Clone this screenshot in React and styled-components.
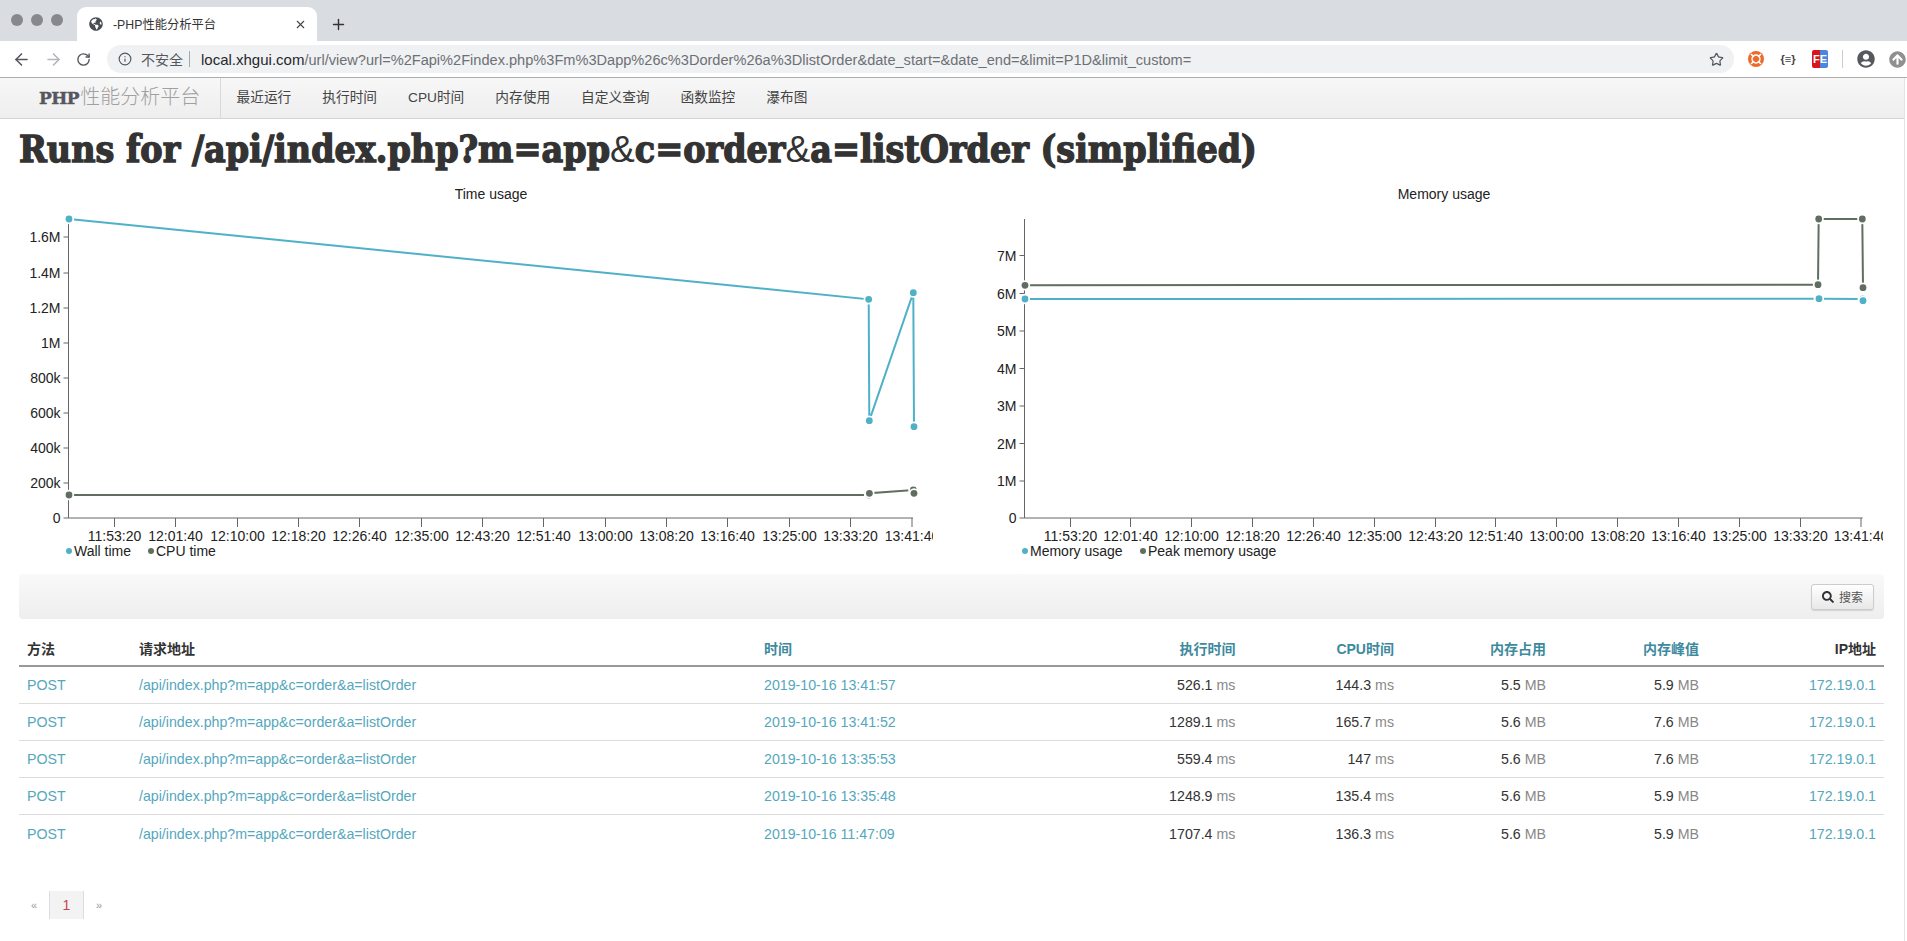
import React from 'react';
import styled, { createGlobalStyle } from 'styled-components';
import { ArrowLeft, ArrowRight, RotateCw, Info, Star, X, Plus } from 'lucide-react';
import { FaGlobeAmericas, FaSearch, FaUserCircle, FaArrowCircleUp } from 'react-icons/fa';

const SANS = '"Liberation Sans", "Noto Sans CJK SC", Arial, sans-serif';
const WALL = '#4fb1c8';
const CPU = '#5f6e60';

const timeLabels = ['11:53:20', '12:01:40', '12:10:00', '12:18:20', '12:26:40', '12:35:00', '12:43:20', '12:51:40', '13:00:00', '13:08:20', '13:16:40', '13:25:00', '13:33:20', '13:41:40'];

const timeChart = {
  title: 'Time usage',
  left: 19,
  axisX: 68.5,
  axisEnd: 913,
  titleX: 491,
  yTicks: [['1.6M', 237], ['1.4M', 273], ['1.2M', 308], ['1M', 343], ['800k', 378], ['600k', 413], ['400k', 448], ['200k', 483], ['0', 518]],
  xTicks: [114.5, 175.5, 237.5, 298.5, 359.5, 421.5, 482.5, 543.5, 605.5, 666.5, 727.5, 789.5, 850.5, 912],
  series: [
    { color: WALL, points: [[69, 219], [868.7, 299.3], [869.3, 420.7], [913.3, 292.7], [914, 426.7]] },
    { color: CPU, points: [[69, 495], [869, 495], [869.4, 493.3], [913.3, 490], [914, 493.3]] },
  ],
  legend: [
    { label: 'Wall time', color: WALL, x: 69 },
    { label: 'CPU time', color: CPU, x: 151 },
  ],
};

const memoryChart = {
  title: 'Memory usage',
  left: 969,
  axisX: 1024.5,
  axisEnd: 1862.7,
  titleX: 1444,
  yTicks: [['7M', 255.5], ['6M', 293.5], ['5M', 331], ['4M', 368.5], ['3M', 406], ['2M', 443.5], ['1M', 481], ['0', 518]],
  xTicks: [1070.5, 1130.5, 1191.5, 1252.5, 1313.5, 1374.5, 1435.5, 1495.5, 1556.5, 1617.5, 1678.5, 1739.5, 1800.5, 1861],
  series: [
    { color: WALL, points: [[1025, 299], [1818.7, 298.7], [1819, 298.7], [1862.7, 299], [1863, 300.7]] },
    { color: CPU, points: [[1025, 285.3], [1818, 284.7], [1818.7, 219], [1862.3, 219], [1863, 287.7]] },
  ],
  legend: [
    { label: 'Memory usage', color: WALL, x: 1025 },
    { label: 'Peak memory usage', color: CPU, x: 1143 },
  ],
};

const navItems = ['最近运行', '执行时间', 'CPU时间', '内存使用', '自定义查询', '函数监控', '瀑布图'];

const columns = [
  { label: '方法', width: 112 },
  { label: '请求地址', width: 625 },
  { label: '时间', width: 288, sort: true },
  { label: '执行时间', width: 199.4, sort: true, right: true },
  { label: 'CPU时间', width: 158.6, sort: true, right: true },
  { label: '内存占用', width: 152, sort: true, right: true },
  { label: '内存峰值', width: 153, sort: true, right: true },
  { label: 'IP地址', width: 177, right: true },
];

const rows = [
  ['2019-10-16 13:41:57', '526.1', '144.3', '5.5', '5.9'],
  ['2019-10-16 13:41:52', '1289.1', '165.7', '5.6', '7.6'],
  ['2019-10-16 13:35:53', '559.4', '147', '5.6', '7.6'],
  ['2019-10-16 13:35:48', '1248.9', '135.4', '5.6', '5.9'],
  ['2019-10-16 11:47:09', '1707.4', '136.3', '5.6', '5.9'],
];

function Chart({ data }) {
  return (
    <ChartSvg viewBox={`${data.left} 180 914 382`}>
      <ChartTitle x={data.titleX} y={199}>{data.title}</ChartTitle>
      <Axis d={`M${data.axisX} 219V518H${data.axisEnd}`} />
      {data.yTicks.map(([label, y]) => (
        <g key={label}>
          <Axis d={`M${data.axisX - 5} ${y}H${data.axisX}`} />
          <TickText x={data.axisX - 8} y={y + 5} $anchor='end'>{label}</TickText>
        </g>
      ))}
      {data.xTicks.map((x, i) => (
        <g key={x}>
          <Axis d={`M${x} 518V527`} />
          <TickText x={x} y={541} $anchor='middle'>{timeLabels[i]}</TickText>
        </g>
      ))}
      {data.series.map(s => (
        <g key={s.color}>
          <SeriesLine stroke={s.color} points={s.points.map(p => p.join(',')).join(' ')} />
          {s.points.map(p => (
            <SeriesDot key={p.join()} cx={p[0]} cy={p[1]} fill={s.color} />
          ))}
        </g>
      ))}
      {data.legend.map(item => (
        <g key={item.label}>
          <circle cx={item.x} cy={551} r={3} fill={item.color} />
          <TickText x={item.x + 5} y={556} $anchor='start'>{item.label}</TickText>
        </g>
      ))}
    </ChartSvg>
  );
}

function App() {
  return (
    <Screen>
      <GlobalStyle />
      <TabStrip>
        <Lights><Light /><Light /><Light /></Lights>
        <Tab>
          <FaGlobeAmericas size={14} color='#4a4d52' />
          <TabTitle>-PHP性能分析平台</TabTitle>
          <X size={13} color='#444' />
        </Tab>
        <NewTab><Plus size={17} color='#333' strokeWidth={2} /></NewTab>
      </TabStrip>
      <Toolbar>
        <ToolIcons>
          <ArrowLeft size={19} color='#54585e' strokeWidth={2} />
          <ArrowRight size={19} color='#b3b6ba' strokeWidth={2} />
          <RotateCw size={15} color='#54585e' strokeWidth={2.2} />
        </ToolIcons>
        <Omnibox>
          <Info size={14} color='#54585e' />
          <Insecure>不安全</Insecure>
          <UrlDivider />
          <Url><b>local.xhgui.com</b>/url/view?url=%2Fapi%2Findex.php%3Fm%3Dapp%26c%3Dorder%26a%3DlistOrder&amp;date_start=&amp;date_end=&amp;limit=P1D&amp;limit_custom=</Url>
          <Star size={15} color='#54585e' />
        </Omnibox>
        <Extensions>
          <svg width='16' height='16' viewBox='0 0 16 16'>
            <circle cx='8' cy='8' r='8' fill='#ec6a2c' />
            <circle cx='8' cy='8' r='4' fill='none' stroke='#fff' strokeWidth='1.4' />
            <path d='M3 3l3 3M13 3l-3 3M3 13l3-3M13 13l-3-3' stroke='#fff' strokeWidth='1.6' />
          </svg>
          <JsonMark>{'{≡}'}</JsonMark>
          <FeBadge>FE</FeBadge>
          <ExtDivider />
          <FaUserCircle size={18} color='#55585d' />
          <FaArrowCircleUp size={17} color='#909090' />
        </Extensions>
      </Toolbar>
      <Viewport>
        <Page>
          <Navbar>
            <Brand><strong>PHP</strong>性能分析平台</Brand>
            <NavList>
              {navItems.map(item => <NavLink key={item}>{item}</NavLink>)}
            </NavList>
          </Navbar>
          <Content>
            <Heading>
              Runs for /api/index.php?m=app<Amp>&amp;</Amp>c=order<Amp>&amp;</Amp>a=listOrder (simplified)
            </Heading>
            <Charts>
              <Chart data={timeChart} />
              <Chart data={memoryChart} />
            </Charts>
            <FilterBar>
              <SearchButton><FaSearch size={12} color='#333' />搜索</SearchButton>
            </FilterBar>
            <RunsTable>
              <thead>
                <tr>
                  {columns.map(col => (
                    <HeadCell key={col.label} $width={col.width} $right={col.right} $sort={col.sort}>{col.label}</HeadCell>
                  ))}
                </tr>
              </thead>
              <tbody>
                {rows.map(row => (
                  <BodyRow key={row[0]}>
                    <Cell><Link>POST</Link></Cell>
                    <Cell><Link>/api/index.php?m=app&amp;c=order&amp;a=listOrder</Link></Cell>
                    <Cell><Link>{row[0]}</Link></Cell>
                    <Cell $right>{row[1]} <Unit>ms</Unit></Cell>
                    <Cell $right>{row[2]} <Unit>ms</Unit></Cell>
                    <Cell $right>{row[3]} <Unit>MB</Unit></Cell>
                    <Cell $right>{row[4]} <Unit>MB</Unit></Cell>
                    <Cell $right><Link>172.19.0.1</Link></Cell>
                  </BodyRow>
                ))}
              </tbody>
            </RunsTable>
            <Pagination>
              <PageArrow $width={30}>«</PageArrow>
              <PageCurrent>1</PageCurrent>
              <PageArrow $width={30}>»</PageArrow>
            </Pagination>
          </Content>
        </Page>
        <ScrollTrack />
      </Viewport>
    </Screen>
  );
}

export default App;

const GlobalStyle = createGlobalStyle`
  html, body {
    margin: 0;
    height: 100%;
    overflow: hidden;
    background: #fff;
  }
  body {
    font-family: ${SANS};
    font-size: 14px;
    color: #333;
  }
`

const Screen = styled.div`
  height: 941px;
  display: flex;
  flex-direction: column;
`

const TabStrip = styled.div`
  height: 41px;
  flex: none;
  background: #d9dce1;
  display: flex;
  align-items: flex-end;
`

const Lights = styled.div`
  width: 77px;
  height: 34px;
  padding-left: 11px;
  box-sizing: border-box;
  display: flex;
  gap: 8px;
  align-items: flex-start;
  padding-top: 7px;
`

const Light = styled.span`
  width: 12px;
  height: 12px;
  border-radius: 50%;
  background: #86888c;
`

const Tab = styled.div`
  width: 240px;
  height: 34px;
  box-sizing: border-box;
  padding: 0 10px 0 12px;
  background: #fff;
  border-radius: 9px 9px 0 0;
  display: flex;
  align-items: center;
`

const TabTitle = styled.span`
  flex: 1;
  margin-left: 10px;
  font-size: 12.3px;
  color: #333;
`

const NewTab = styled.div`
  height: 34px;
  margin-left: 13px;
  display: flex;
  align-items: center;
`

const Toolbar = styled.div`
  height: 36px;
  flex: none;
  box-sizing: content-box;
  background: #fff;
  border-bottom: 1px solid #adadad;
  display: flex;
  align-items: center;
`

const ToolIcons = styled.div`
  width: 107px;
  flex: none;
  padding-left: 12px;
  box-sizing: border-box;
  display: flex;
  align-items: center;
  gap: 13px;
`

const Omnibox = styled.div`
  width: 1627px;
  flex: none;
  height: 28px;
  box-sizing: border-box;
  padding: 0 10px 0 11px;
  background: #f0f1f3;
  border-radius: 14px;
  display: flex;
  align-items: center;
`

const Insecure = styled.span`
  margin-left: 9px;
  font-size: 14px;
  color: #54585e;
`

const UrlDivider = styled.span`
  width: 1px;
  height: 16px;
  margin: 0 11px 0 6px;
  background: #a4a7ab;
`

const Url = styled.span`
  flex: 1;
  font-size: 14.58px;
  color: #6d7074;
  white-space: nowrap;
  b {
    font-size: 15px;
    font-weight: 400;
    color: #26282b;
  }
`

const Extensions = styled.div`
  flex: none;
  display: flex;
  align-items: center;
  gap: 14px;
  padding-left: 14px;
`

const JsonMark = styled.span`
  width: 20px;
  text-align: center;
  white-space: nowrap;
  font-size: 11px;
  font-weight: 700;
  color: #444;
`

const FeBadge = styled.span`
  width: 16px;
  height: 18px;
  border-radius: 2px;
  font-size: 11px;
  line-height: 18px;
  font-weight: 700;
  text-align: center;
  color: #fff;
  background: linear-gradient(90deg, #d8141c 50%, #4a86e0 50%);
`

const ExtDivider = styled.span`
  width: 1px;
  height: 18px;
  background: #ccc;
`

const Viewport = styled.div`
  flex: 1;
  display: flex;
  min-height: 0;
`

const Page = styled.div`
  flex: 1;
  min-width: 0;
`

const ScrollTrack = styled.div`
  width: 2px;
  border-left: 1px solid #e4e4e4;
`

const Navbar = styled.div`
  height: 40px;
  background: linear-gradient(#f7f7f7, #eee);
  border-bottom: 1px solid #d4d4d4;
  display: flex;
  align-items: stretch;
`

const Brand = styled.div`
  width: 221px;
  box-sizing: border-box;
  padding-left: 39px;
  border-right: 1px solid #d9d9d9;
  font-size: 20px;
  font-weight: 300;
  color: #a0a0a0;
  line-height: 39px;
  white-space: nowrap;
  strong {
    font-family: "DejaVu Serif", serif;
    font-size: 17px;
    font-weight: 700;
    color: #555560;
    letter-spacing: -0.5px;
    margin-right: 1px;
    -webkit-text-stroke: 0.4px #555560;
  }
`

const NavList = styled.div`
  display: flex;
`

const NavLink = styled.a`
  padding: 0 15.5px;
  font-size: 13.7px;
  line-height: 39px;
  color: #444;
`

const Content = styled.div`
  padding: 0 20px 0 19px;
`

const Heading = styled.h1`
  margin: 0;
  height: 61px;
  line-height: 61px;
  font-family: "DejaVu Serif Condensed", "DejaVu Serif", serif;
  font-stretch: condensed;
  font-size: 37.2px;
  font-weight: 700;
  color: #333;
  white-space: nowrap;
  -webkit-text-stroke: 1.3px #333;
`

const Amp = styled.span`
  font-family: ${SANS};
  font-weight: 400;
  -webkit-text-stroke: 0;
`

const Charts = styled.div`
  display: flex;
  gap: 36px;
  margin-bottom: 12px;
`

const ChartSvg = styled.svg`
  width: 914px;
  height: 382px;
  flex: none;
  display: block;
`

const ChartTitle = styled.text`
  font-family: ${SANS};
  font-size: 14px;
  fill: #222;
  text-anchor: middle;
`

const Axis = styled.path`
  fill: none;
  stroke: #666;
  stroke-width: 1;
`

const TickText = styled.text`
  font-family: ${SANS};
  font-size: 14px;
  fill: #222;
  text-anchor: ${props => props.$anchor};
`

const SeriesLine = styled.polyline`
  fill: none;
  stroke-width: 2;
`

const SeriesDot = styled.circle.attrs({ r: 3.4 })`
  stroke: #fff;
  stroke-width: 3.5;
  paint-order: stroke;
`

const FilterBar = styled.div`
  height: 45px;
  box-sizing: border-box;
  padding-right: 10px;
  border-radius: 4px;
  background: linear-gradient(#f9f9f9, #eee);
  display: flex;
  align-items: center;
  justify-content: flex-end;
`

const SearchButton = styled.button`
  width: 63px;
  height: 26px;
  padding: 0;
  font-family: ${SANS};
  font-size: 12px;
  color: #555;
  background: linear-gradient(#fff, #e8e8e8);
  border: 1px solid #ccc;
  border-radius: 3px;
  box-shadow: 0 1px 1px rgba(0, 0, 0, 0.12);
  display: flex;
  align-items: center;
  justify-content: center;
  gap: 5px;
`

const RunsTable = styled.table`
  margin-top: 11px;
  width: 1865px;
  table-layout: fixed;
  border-collapse: separate;
  border-spacing: 0;
`

const HeadCell = styled.th`
  width: ${props => props.$width}px;
  box-sizing: border-box;
  height: 37px;
  padding: 0 8px;
  font-size: 14px;
  font-weight: 700;
  text-align: ${props => (props.$right ? 'right' : 'left')};
  color: ${props => (props.$sort ? '#3d8a9e' : '#333')};
  border-bottom: 2px solid #999;
`

const BodyRow = styled.tr`
  &:last-child td {
    border-bottom: 0;
  }
`

const Cell = styled.td`
  height: 37px;
  box-sizing: border-box;
  padding: 0 8px;
  font-size: 14.2px;
  color: #333;
  text-align: ${props => (props.$right ? 'right' : 'left')};
  border-bottom: 1px solid #ddd;
  white-space: nowrap;
`

const Link = styled.a`
  color: #55a7bc;
`

const Unit = styled.span`
  color: #888;
`

const Pagination = styled.div`
  margin-top: 39px;
  height: 28px;
  display: flex;
`

const PageArrow = styled.span`
  width: ${props => props.$width}px;
  text-align: center;
  font-size: 11px;
  line-height: 28px;
  color: #999;
`

const PageCurrent = styled.span`
  width: 33px;
  text-align: center;
  font-size: 14px;
  line-height: 28px;
  color: #c4434f;
  background: #f3f3f3;
  border: solid #ddd;
  border-width: 0 1px;
`
